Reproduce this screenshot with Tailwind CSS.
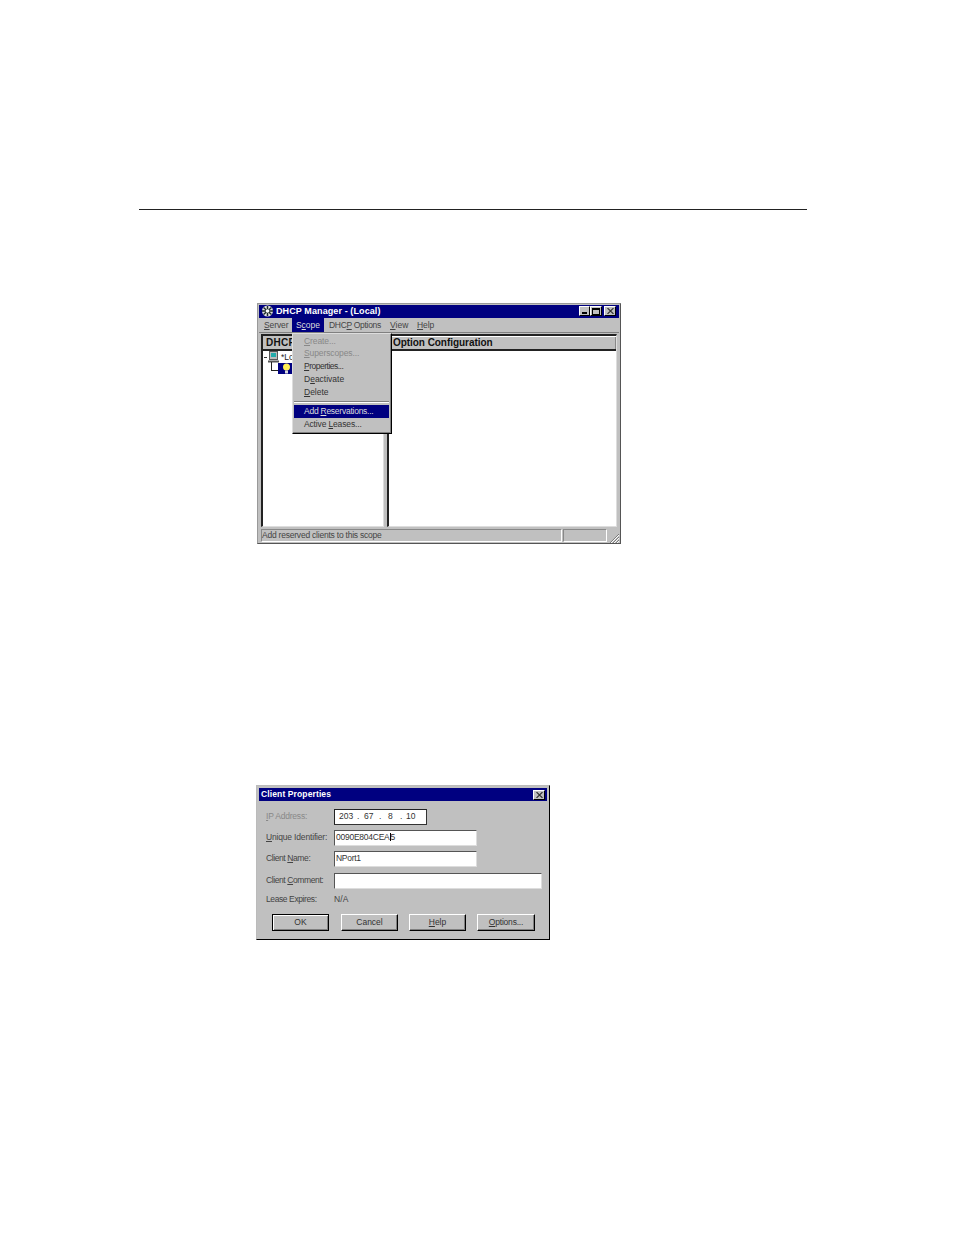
<!DOCTYPE html>
<html lang="en">
<head>
<meta charset="UTF-8">
<title>DHCP Manager</title>
<script src="https://cdn.jsdelivr.net/npm/@tailwindcss/browser@4"></script>
</head>
<body class="bg-white font-['Liberation_Sans',sans-serif] text-[8.5px] leading-none text-[#222]">
<div class="w-[954px] h-[1235px] overflow-hidden">
  <div class="pt-[209px] pl-[139px]"><div class="w-[668px] h-px bg-[#222]"></div></div>

  <!-- DHCP manager window -->
  <div class="relative ml-[257px] mt-[93px] w-[364px] h-[241px] bg-[#c0c0c0] border border-[#999] border-r-[#555] border-b-[#555] px-[1px] pt-[1px] flex flex-col">
    <div class="h-[13px] bg-[#000080] flex items-center pl-[2px] pr-[3px] text-white font-bold text-[9px] tracking-[0.1px]">
      <svg class="w-[13px] h-[12px] mr-[2px] shrink-0" viewBox="0 0 13 12"><circle cx="6.500" cy="6" r="5.500" fill="#e4e4e4"/><path d="M2.500 2.500l8 7M10.500 2.500l-8 7M1 6h11M6.500 1v10" stroke="#1c2a2a" stroke-width="1.500"/><circle cx="6.500" cy="6" r="1.800" fill="#fff"/></svg>
      <span>DHCP Manager - (Local)</span>
      <div class="ml-auto flex">
        <div class="w-[11px] h-[10px] bg-[#c0c0c0] border border-t-white border-l-white border-r-black border-b-black flex items-end pl-[2px] pb-[1px]"><div class="w-[5px] h-[2px] bg-black"></div></div>
        <div class="w-[12px] h-[10px] bg-[#c0c0c0] border border-t-white border-l-white border-r-black border-b-black flex items-center justify-center"><div class="w-[8px] h-[7px] border border-black border-t-2"></div></div>
        <div class="ml-[2px] w-[12px] h-[10px] bg-[#c0c0c0] border border-t-white border-l-white border-r-black border-b-black flex items-center justify-center">
          <svg class="w-[7px] h-[6px]" viewBox="0 0 7 6"><path d="M0.5 0l6 6M6.5 0l-6 6" stroke="#333" stroke-width="1.1"/></svg>
        </div>
      </div>
    </div>
    <div class="h-[16px] flex items-center text-[8.5px] text-[#444] border-b border-[#808080]">
      <span class="ml-[5px] w-[28px] tracking-[-0.1px]"><u>S</u>erver</span>
      <span class="h-[14px] w-[32px] bg-[#000080] text-[#ddd] flex items-center justify-center"><span>S<u>c</u>ope</span></span>
      <span class="ml-[5px] w-[61px] tracking-[-0.3px]">DHC<u>P</u> Options</span>
      <span class="w-[27px]"><u>V</u>iew</span>
      <span class="tracking-[-0.1px]"><u>H</u>elp</span>
    </div>
    <div class="flex flex-1 pt-[1px] pl-[2px] pr-[2px]">
      <div class="w-[123px] h-[193px] bg-white border-2 border-t-[#222] border-l-[#222] border-r-[#ddd] border-b-[#ddd] border-r-1 border-b-1">
        <div class="h-[15px] bg-[#c0c0c0] border-b-2 border-[#222] pl-[3px] flex items-center font-bold text-[10px] tracking-[0.3px] text-[#111]">DHCP</div>
        <div class="relative h-[40px]">
          <div class="absolute left-[1px] top-[6px] w-[3px] h-px bg-[#333]"></div>
          <svg class="absolute left-[4px] top-[0px] w-[13px] h-[12px]" viewBox="0 0 13 12"><rect x="2.500" y="0.500" width="8" height="8" fill="#bbb" stroke="#555"/><rect x="4" y="2" width="5" height="4" fill="#2aa"/><path d="M1 10.500h11" stroke="#555" stroke-width="2"/></svg>
          <span class="absolute left-[18px] top-[2px]">*Local</span>
          <div class="absolute left-[8px] top-[11px] w-[8px] h-[9px] border-l border-b border-[#222]"></div>
          <div class="absolute left-[15px] top-[12px] w-[16px] h-[11px] bg-[#000080] flex items-center justify-center">
            <svg class="w-[9px] h-[11px]" viewBox="0 0 9 11"><circle cx="4.500" cy="4" r="3.500" fill="#ffee55"/><rect x="3" y="7.500" width="3" height="3" fill="#ddd"/></svg>
          </div>
        </div>
      </div>
      <div class="w-[3px]"></div>
      <div class="w-[230px] h-[193px] bg-white border-2 border-t-[#222] border-l-[#222] border-r-[#ddd] border-b-[#ddd] border-r-1 border-b-1">
        <div class="h-[15px] bg-[#c0c0c0] border-b-2 border-[#222] pl-[4px] flex items-center font-bold text-[10px] tracking-[-0.05px] text-[#111] shadow-[inset_0_1px_0_#fff,inset_-1px_0_0_#888]">Option Configuration</div>
      </div>
    </div>
    <div class="h-[16px] flex items-center text-[#444] pl-[2px] shrink-0">
      <div class="w-[302px] h-[13px] border border-t-[#888] border-l-[#888] border-r-white border-b-white flex items-center tracking-[-0.22px]">Add reserved clients to this scope</div>
      <div class="ml-[1px] w-[44px] h-[13px] border border-t-[#888] border-l-[#888] border-r-white border-b-white"></div>
      <svg class="ml-[2px] w-[10px] h-[10px] self-end" viewBox="0 0 10 10"><path d="M1 10L10 1M4 10l6-6M7 10l3-3" stroke="#777"/><path d="M2 10L10 2M5 10l5-5M8 10l2-2" stroke="#fff"/></svg>
    </div>

    <!-- open Scope menu -->
    <div class="absolute left-[34px] top-[29px] w-[100px] h-[101px] bg-[#c0c0c0] border border-t-[#ddd] border-l-[#ddd] border-r-black border-b-black shadow-[inset_-1px_-1px_0_#808080] pl-[1px] pr-[2px] flex flex-col text-[8.5px] text-[#333]">
      <div class="h-[12.5px] mt-[1px] pl-[10px] flex items-center text-[#888]"><span class="tracking-[-0.1px]"><u>C</u>reate...</span></div>
      <div class="h-[12px] pl-[10px] flex items-center text-[#888]"><span class="tracking-[-0.1px]"><u>S</u>uperscopes...</span></div>
      <div class="h-[13.5px] pl-[10px] flex items-center"><span class="tracking-[-0.5px]"><u>P</u>roperties...</span></div>
      <div class="h-[13px] pl-[10px] flex items-center"><span>D<u>e</u>activate</span></div>
      <div class="h-[13px] pl-[10px] flex items-center"><span><u>D</u>elete</span></div>
      <div class="h-[2px] mt-[2px] mb-[2px] border-t border-[#808080] border-b border-b-white"></div>
      <div class="h-[13px] pl-[10px] flex items-center bg-[#000080] text-[#ddd]"><span class="tracking-[-0.25px]">Add <u>R</u>eservations...</span></div>
      <div class="h-[13px] pl-[10px] flex items-center"><span class="tracking-[-0.15px]">Active <u>L</u>eases...</span></div>
    </div>
  </div>

  <!-- Client Properties dialog -->
  <div class="ml-[256px] mt-[241px] w-[294px] h-[155px] bg-[#c0c0c0] border border-[#bbb] border-r-black border-b-black pl-[2px] pr-[2px] pt-[2px] flex flex-col text-[#444]">
    <div class="h-[13px] bg-[#000080] text-white font-bold text-[8.5px] tracking-[0.12px] flex items-center pl-[2px] pr-[2px] justify-between">
      <span>Client Properties</span>
      <div class="w-[12px] h-[10px] bg-[#c0c0c0] border border-t-white border-l-white border-r-black border-b-black flex items-center justify-center">
        <svg class="w-[7px] h-[6px]" viewBox="0 0 7 6"><path d="M0.5 0l6 6M6.5 0l-6 6" stroke="#333" stroke-width="1.1"/></svg>
      </div>
    </div>
    <div class="flex items-center mt-[8px] h-[16px]">
      <span class="w-[75px] pl-[7px] pb-[2px] text-[#888] tracking-[-0.2px]"><u>I</u>P Address:</span>
      <div class="w-[93px] h-[16px] bg-white border border-t-[#222] border-l-[#222] border-[#333] flex items-center text-[#333] pl-[4px] pb-[2px]">
        <span class="w-[18px]">203</span><span class="w-[7px]">.</span><span class="w-[15px]">67</span><span class="w-[9px]">.</span><span class="w-[12px]">8</span><span class="w-[6px]">.</span><span>10</span>
      </div>
    </div>
    <div class="flex items-center mt-[5px] h-[16px]">
      <span class="w-[75px] pl-[7px] pb-[2px] tracking-[-0.17px]"><u>U</u>nique Identifier:</span>
      <div class="w-[143px] h-[16px] bg-white border border-t-[#555] border-l-[#555] border-r-[#ddd] border-b-[#ddd] pl-[1px] pb-[2px] flex items-center text-[#333] tracking-[-0.25px]"><span>0090E804CEA</span><span class="border-l border-black">5</span></div>
    </div>
    <div class="flex items-center mt-[5px] h-[16px]">
      <span class="w-[75px] pl-[7px] pb-[2px] tracking-[-0.4px]">Client <u>N</u>ame:</span>
      <div class="w-[143px] h-[16px] bg-white border border-t-[#555] border-l-[#555] border-r-[#ddd] border-b-[#ddd] pl-[1px] pb-[2px] flex items-center text-[#333] tracking-[-0.3px]">NPort1</div>
    </div>
    <div class="flex items-center mt-[6px] h-[16px]">
      <span class="w-[75px] pl-[7px] pb-[2px] tracking-[-0.4px]">Client <u>C</u>omment:</span>
      <div class="w-[208px] h-[16px] bg-white border border-t-[#555] border-l-[#555] border-r-[#ddd] border-b-[#ddd]"></div>
    </div>
    <div class="flex items-center mt-[3px] h-[16px]">
      <span class="w-[75px] pl-[7px] pb-[2px] tracking-[-0.4px]">Lease Expires:</span>
      <span class="pb-[2px] tracking-[0.1px]">N/A</span>
    </div>
    <div class="flex mt-[6px] pl-[13px] text-[#333]">
      <div class="w-[57px] h-[17px] border border-black shadow-[inset_1px_1px_0_#fff,inset_-1px_-1px_0_#808080] flex items-center justify-center">OK</div>
      <div class="ml-[12px] w-[57px] h-[17px] border border-t-white border-l-white border-r-black border-b-black shadow-[inset_-1px_-1px_0_#808080] flex items-center justify-center">Cancel</div>
      <div class="ml-[11px] w-[57px] h-[17px] border border-t-white border-l-white border-r-black border-b-black shadow-[inset_-1px_-1px_0_#808080] flex items-center justify-center"><span><u>H</u>elp</span></div>
      <div class="ml-[11px] w-[58px] h-[17px] border border-t-white border-l-white border-r-black border-b-black shadow-[inset_-1px_-1px_0_#808080] flex items-center justify-center"><span class="tracking-[-0.2px]"><u>O</u>ptions...</span></div>
    </div>
  </div>
</div>
</body>
</html>
